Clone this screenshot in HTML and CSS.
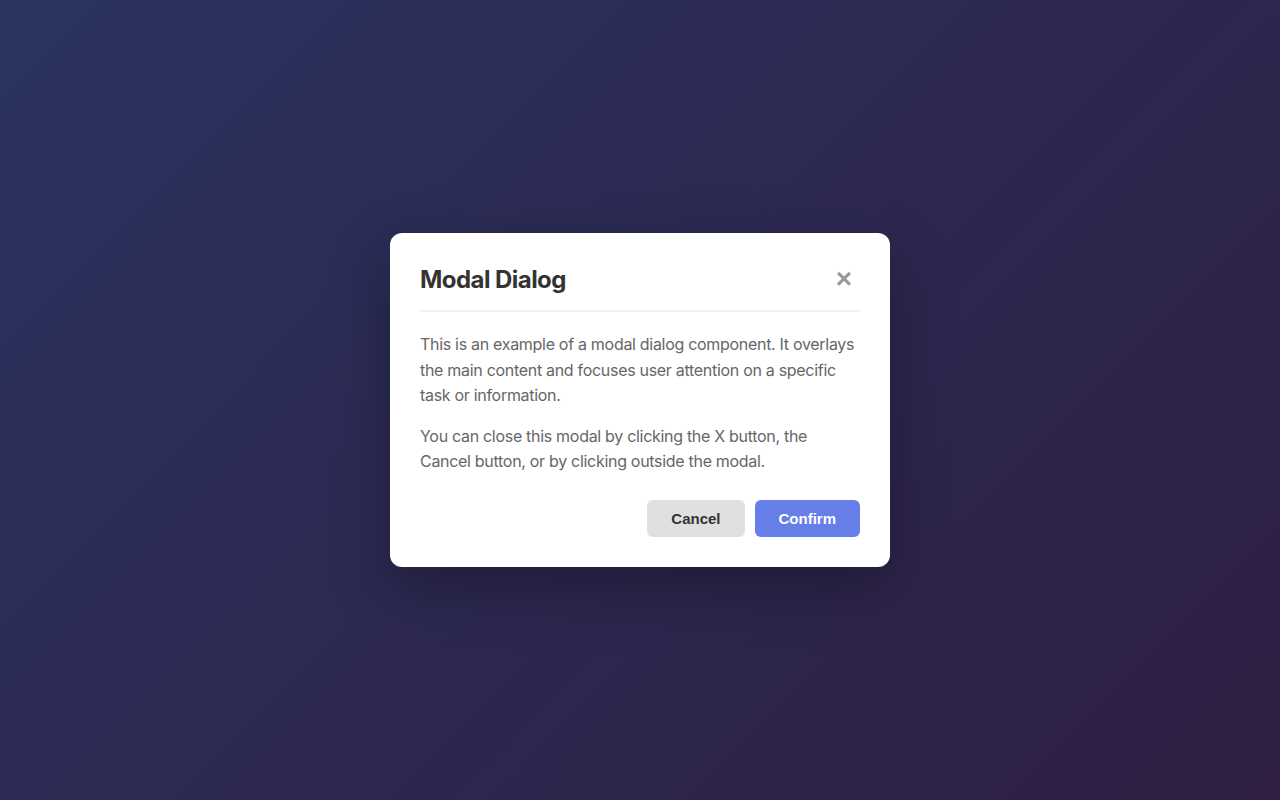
FILE: index.html
```html
<!DOCTYPE html>
<html lang="en">
<head>
<meta charset="utf-8">
<title>Modal Dialog</title>
<link rel="stylesheet" href="styles.css">
</head>
<body>
<div class="overlay">
  <div class="modal">
    <div class="modal-header">
      <h2 class="modal-title">Modal Dialog</h2>
      <button class="close-btn" aria-label="Close">×</button>
    </div>
    <div class="modal-body">
      <p>This is an example of a modal dialog component. It overlays the main content and focuses user attention on a specific task or information.</p>
      <p>You can close this modal by clicking the X button, the Cancel button, or by clicking outside the modal.</p>
    </div>
    <div class="modal-footer">
      <button class="btn btn-cancel">Cancel</button>
      <button class="btn btn-confirm">Confirm</button>
    </div>
  </div>
</div>
</body>
</html>
```
FILE: styles.css
```css
* { box-sizing: border-box; }
html, body { margin: 0; padding: 0; height: 100%; }
body {
  font-family: Inter, "Noto Sans", sans-serif;
  background: linear-gradient(135deg, #2a3360 0%, #2f1e42 100%);
}
.overlay {
  height: 100vh;
  display: flex;
  align-items: center;
  justify-content: center;
}
.modal {
  width: 500px;
  background: #fff;
  border-radius: 12px;
  padding: 30px;
  box-shadow: 0 20px 60px rgba(0, 0, 0, 0.3);
}
.modal-header {
  display: flex;
  align-items: center;
  justify-content: space-between;
  padding-bottom: 15px;
  border-bottom: 2px solid #f0f0f0;
  margin-bottom: 20px;
}
.modal-title {
  margin: 0;
  padding-top: 3px;
  font-size: 24px;
  font-weight: 700;
  letter-spacing: -0.55px;
  color: #333;
  line-height: 1.2;
}
.close-btn {
  width: 32px;
  height: 32px;
  padding: 0;
  border: none;
  background: none;
  color: #999;
  font-family: "Liberation Sans", Arial, sans-serif;
  font-weight: 700;
  font-size: 28px;
  line-height: 1;
  cursor: pointer;
  display: flex;
  align-items: center;
  justify-content: center;
}
.modal-body p {
  margin: 0 0 15px;
  font-size: 16px;
  line-height: 1.6;
  letter-spacing: -0.3px;
  color: #666;
}
.modal-footer {
  display: flex;
  justify-content: flex-end;
  gap: 10px;
  margin-top: 25px;
}
.btn {
  font-family: "Liberation Sans", Arial, sans-serif;
  font-size: 15px;
  font-weight: 700;
  padding: 10px 24px;
  border: none;
  border-radius: 6px;
  cursor: pointer;
  line-height: normal;
}
.btn-cancel { background: #e0e0e0; color: #333; }
.btn-confirm { background: #667eea; color: #fff; }
```
